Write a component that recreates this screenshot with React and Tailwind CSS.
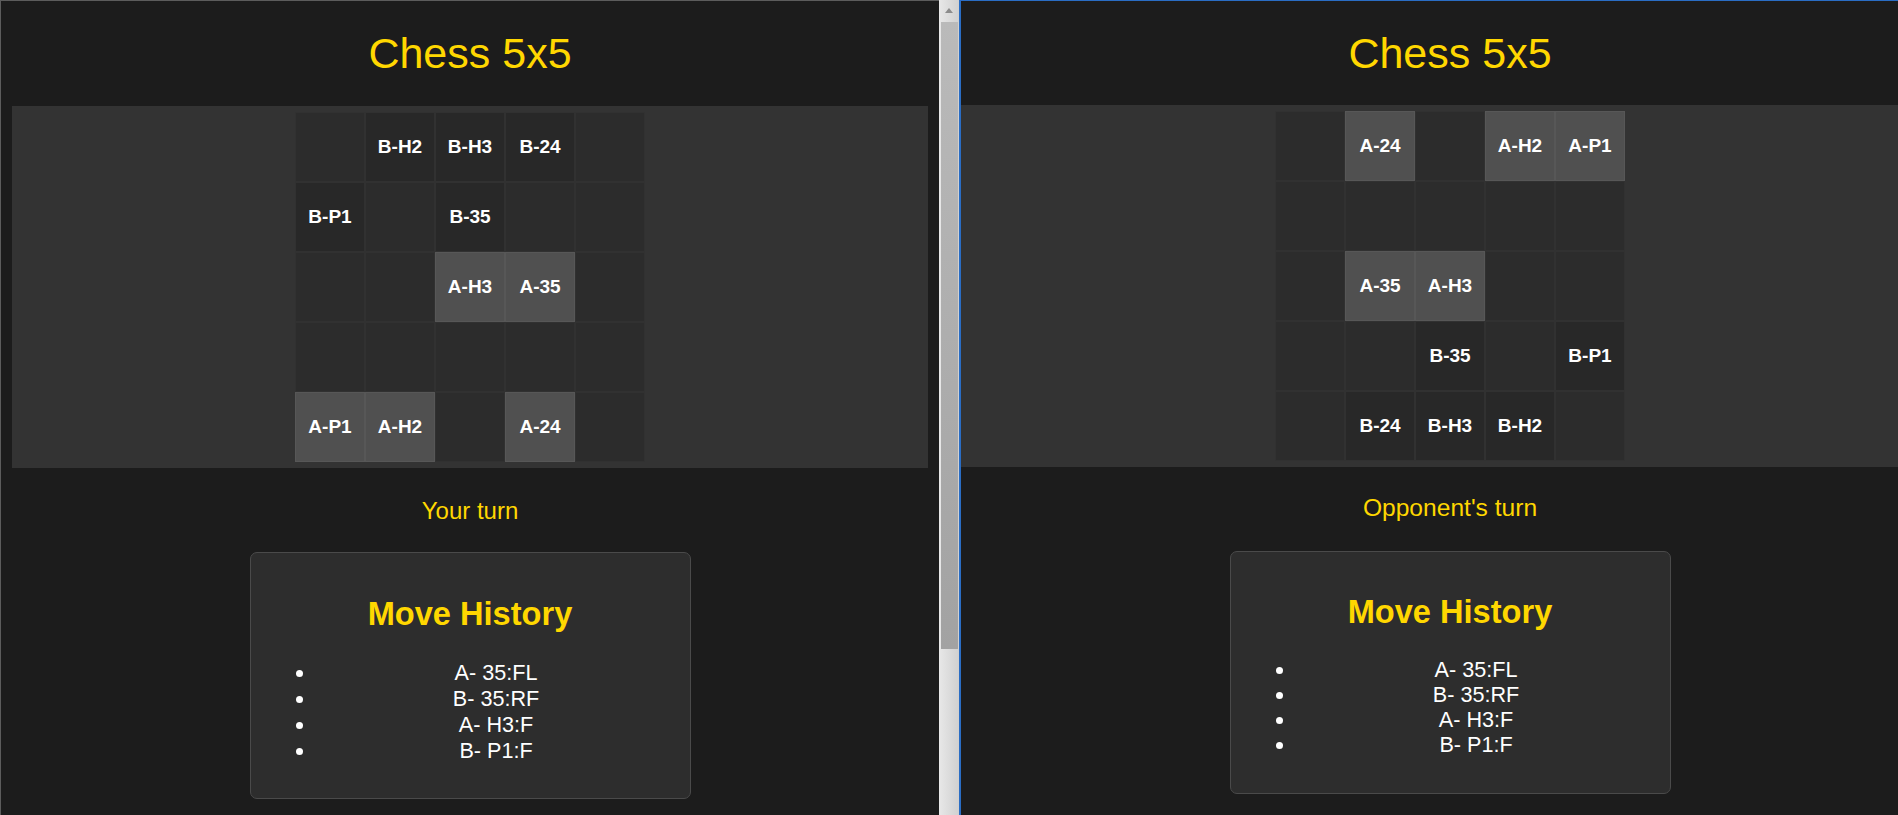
import React from "react";

// Deux vues du même plateau : joueur A (gauche) et joueur B (droite)
const LEFT_BOARD = [
  ["", "B-H2", "B-H3", "B-24", ""],
  ["B-P1", "", "B-35", "", ""],
  ["", "", "A-H3", "A-35", ""],
  ["", "", "", "", ""],
  ["A-P1", "A-H2", "", "A-24", ""],
];

const RIGHT_BOARD = [
  ["", "A-24", "", "A-H2", "A-P1"],
  ["", "", "", "", ""],
  ["", "A-35", "A-H3", "", ""],
  ["", "", "B-35", "", "B-P1"],
  ["", "B-24", "B-H3", "B-H2", ""],
];

const HISTORY = ["A- 35:FL", "B- 35:RF", "A- H3:F", "B- P1:F"];

// petites différences de mise en page entre les deux fenêtres
const VARIANTS = {
  left: {
    pane: "w-[939px] border-l border-t border-[#5c5c5c]",
    header: "pt-[27px] pb-[28px]",
    panel: "mx-[11px]",
    status: "mt-[29px] text-[24px] leading-[28px]",
    box: "mt-[27px] pt-[42px] pb-[34px]",
    list: "mt-[28px] leading-[26px]",
  },
  right: {
    pane: "w-[978px] border-t border-[#2a6dc4]",
    header: "pt-[27px] pb-[27px]",
    panel: "mx-0",
    status: "mt-[27px] text-[24.6px] leading-[28px]",
    box: "mt-[29px] pt-[41px] pb-[36px]",
    list: "mt-[27px] leading-[25px]",
  },
};

function Cell({ piece }) {
  const tone = piece.startsWith("A")
    ? "bg-[#505050] border-[#575757]"
    : piece.startsWith("B")
    ? "bg-[#282828] border-[#313131]"
    : "bg-[#2c2c2c] border-[#313131]";
  return (
    <div className={`w-[70px] h-[70px] border flex items-center justify-center text-white font-bold text-[19px] ${tone}`}>
      {piece}
    </div>
  );
}

function Pane({ board, status, variant }) {
  const v = VARIANTS[variant];
  return (
    <div className={`shrink-0 h-full bg-[#1c1c1c] ${v.pane}`}>
      {/* Titre */}
      <div className={v.header}>
        <h1 className="text-center text-[43px] leading-[50px] text-[#ffd700]">Chess 5x5</h1>
      </div>

      {/* Plateau */}
      <div className={`bg-[#333333] py-[6px] flex justify-center ${v.panel}`}>
        <div className="grid grid-cols-5">
          {board.flat().map((p, i) => (
            <Cell key={i} piece={p} />
          ))}
        </div>
      </div>

      {/* Tour */}
      <p className={`text-center text-[#ffd700] ${v.status}`}>{status}</p>

      {/* Historique */}
      <div className={`mx-auto w-[441px] rounded-[7px] border border-[#4a4a4a] bg-[#2d2d2d] px-[13px] ${v.box}`}>
        <h2 className="text-center text-[32.6px] leading-[37px] font-bold text-[#ffd700]">Move History</h2>
        <ul className={`list-disc pl-[52px] text-center text-white text-[21.6px] ${v.list}`}>
          {HISTORY.map((m) => (
            <li key={m}>{m}</li>
          ))}
        </ul>
      </div>
    </div>
  );
}

function Scrollbar() {
  return (
    <div className="shrink-0 w-[20px] h-full bg-gradient-to-r from-[#e8e8e8] to-[#d0d0d0] flex flex-col items-center">
      <svg width="12" height="20" viewBox="0 0 12 20">
        <path d="M2 13 L6 8 L10 13 Z" fill="#8c8c8c" />
      </svg>
      <div className="mt-[2px] w-[17px] h-[627px] bg-gradient-to-b from-[#bababa] to-[#a2a2a2]" />
    </div>
  );
}

export default function App() {
  return (
    <div
      className="h-[815px] w-[1898px] overflow-hidden flex bg-[#1c1c1c]"
      style={{ fontFamily: '"Liberation Sans", Arial, sans-serif' }}
    >
      <Pane board={LEFT_BOARD} status="Your turn" variant="left" />
      <Scrollbar />
      <div className="shrink-0 w-[2px] h-full bg-[#2a6dc4]" />
      <div className="flex-1 h-full overflow-hidden">
        <Pane board={RIGHT_BOARD} status="Opponent's turn" variant="right" />
      </div>
    </div>
  );
}
